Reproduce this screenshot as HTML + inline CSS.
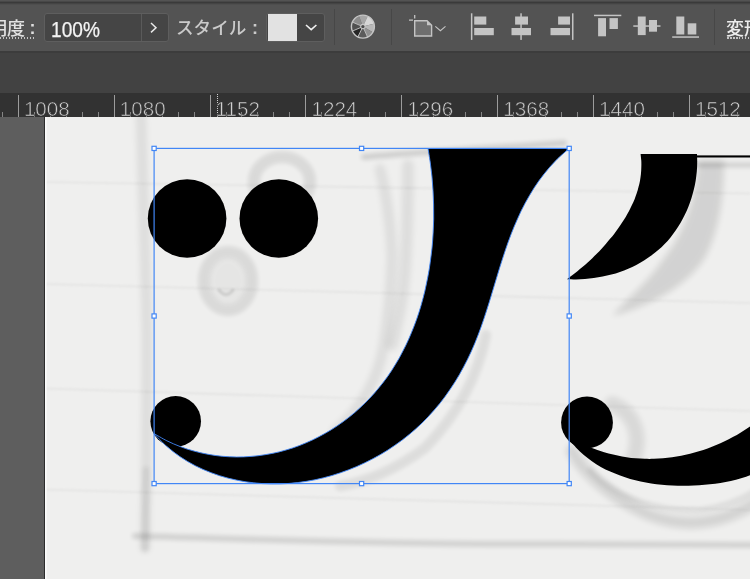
<!DOCTYPE html>
<html lang="ja">
<head>
<meta charset="utf-8">
<title>Illustrator</title>
<style>
html,body{margin:0;padding:0;}
body{width:750px;height:579px;overflow:hidden;background:#424242;position:relative;
  font-family:"Liberation Sans","Noto Sans CJK JP",sans-serif;}
.abs{position:absolute;}
#topstrip{left:0;top:0;width:750px;height:2px;background:linear-gradient(#535353 0,#535353 1px,#484848 1px,#484848 2px);}
#topline{left:0;top:2px;width:750px;height:3px;background:linear-gradient(#3a3a3a 0,#3a3a3a 1px,#444444 1px,#444444 2px,#4e4e4e 2px,#4e4e4e 3px);}
#toolbar{left:0;top:5px;width:750px;height:46px;background:#535353;}
#tbline{left:0;top:51px;width:750px;height:2px;background:#3c3c3c;}
#darkband{left:0;top:53px;width:750px;height:40px;background:#424242;}
#ruler{left:0;top:93px;width:750px;height:24px;background:#323232;overflow:hidden;}
#canvas{left:0;top:117px;width:750px;height:462px;background:#efefee;overflow:hidden;}
.lbl{position:absolute;white-space:nowrap;line-height:1;}
.box{position:absolute;background:#454545;border:1px solid #5e5e5e;box-sizing:border-box;}
.dots{height:1.5px;background:repeating-linear-gradient(90deg,#c4c4c4 0,#c4c4c4 1.5px,transparent 1.5px,transparent 3px);}
.sep{position:absolute;top:9px;width:1px;height:36px;background:#474747;}
.rl{position:absolute;top:5.5px;font-size:20.6px;line-height:1;color:#cfcfcf;white-space:nowrap;
  -webkit-text-stroke:0.6px #323232;letter-spacing:0px;margin-left:-1px;}
</style>
</head>
<body>
<div id="ui" class="abs" style="left:0;top:0;width:750px;height:117px;filter:grayscale(1);overflow:hidden;">
<div id="topstrip" class="abs"></div>
<div id="topline" class="abs"></div>
<div id="toolbar" class="abs"></div>
<div id="tbline" class="abs"></div>
<div id="darkband" class="abs"></div>

<!-- toolbar contents -->
<div class="lbl" id="l1" style="left:-29px;top:19.5px;font-size:18px;font-weight:500;color:#e2e2e2;">透明度</div>
<div class="lbl" id="l1c" style="left:29.6px;top:19.4px;font-size:18px;font-weight:bold;color:#dedede;">:</div>
<div class="abs dots" style="left:0;top:37px;width:36px;"></div>
<div class="box" style="left:44px;top:13px;width:125px;height:29px;border-radius:3px;"></div>
<div class="abs" style="left:141px;top:14px;width:1px;height:27px;background:#5a5a5a;"></div>
<div class="lbl" id="l2" style="left:50.5px;top:19.5px;font-size:21.5px;color:#f4f4f4;-webkit-text-stroke:0.25px #f4f4f4;transform:scaleX(0.89);transform-origin:0 0;">100%</div>
<div class="lbl" id="l3" style="left:176px;top:19.5px;font-size:17.6px;font-weight:500;color:#cacaca;">スタイル</div>
<div class="lbl" id="l3c" style="left:252px;top:19.4px;font-size:18px;font-weight:bold;color:#cacaca;">:</div>
<div class="box" style="left:266px;top:13px;width:59px;height:29px;border-radius:3px;"></div>
<div class="abs" style="left:268px;top:14px;width:29px;height:27px;background:#e2e2e2;"></div>
<div class="sep" style="left:334px;"></div>
<div class="sep" style="left:391px;"></div>
<div class="sep" style="left:714px;"></div>
<div class="lbl" id="l4" style="left:726px;top:19.5px;font-size:18px;font-weight:500;color:#ececec;">変形</div>
<div class="abs dots" style="left:727px;top:37px;width:30px;"></div>

<svg class="abs" id="icons" style="left:0;top:0;" width="750" height="53" viewBox="0 0 750 53">
  <!-- chevrons -->
  <polyline points="151,23 156,27.7 151,32.4" fill="none" stroke="#e8e8e8" stroke-width="1.5"/>
  <polyline points="306,25 311.2,29.6 316.4,25" fill="none" stroke="#f0f0f0" stroke-width="1.6"/>
  <!-- colour wheel -->
  <g id="wheel" transform="translate(362.9,26.6)">
    <path d="M0,0 L-10.49,-4.45 A11.4,11.4 0 0 1 -3.90,-10.71 Z" fill="#8c8c8c"/>
    <path d="M0,0 L-3.90,-10.71 A11.4,11.4 0 0 1 4.82,-10.33 Z" fill="#a6a6a6"/>
    <path d="M0,0 L4.82,-10.33 A11.4,11.4 0 0 1 11.01,-2.95 Z" fill="#d6d6d6"/>
    <path d="M0,0 L11.01,-2.95 A11.4,11.4 0 0 1 9.87,5.70 Z" fill="#b8b8b8"/>
    <path d="M0,0 L9.87,5.70 A11.4,11.4 0 0 1 4.64,10.41 Z" fill="#929292"/>
    <path d="M0,0 L4.64,10.41 A11.4,11.4 0 0 1 -5.00,10.25 Z" fill="#5c5c5c"/>
    <path d="M0,0 L-5.00,10.25 A11.4,11.4 0 0 1 -10.49,4.45 Z" fill="#262626"/>
    <path d="M0,0 L-10.49,4.45 A11.4,11.4 0 0 1 -10.49,-4.45 Z" fill="#505050"/>
    <path d="M0,0 L4.64,10.41" stroke="#c6c6c6" stroke-width="0.9" fill="none"/>
    <path d="M0,0 L-5.00,10.25" stroke="#c6c6c6" stroke-width="0.9" fill="none"/>
    <path d="M0,0 L-10.49,4.45" stroke="#c6c6c6" stroke-width="0.9" fill="none"/>
    <path d="M0,0 L-10.49,-4.45" stroke="#c6c6c6" stroke-width="0.9" fill="none"/>
    <circle r="11.5" fill="none" stroke="#c6c6c6" stroke-width="1.4"/>
    <circle r="2.2" fill="#4a4a4a" stroke="#c6c6c6" stroke-width="1.1"/>
  </g>
  <!-- artboard icon -->
  <path d="M414.7,20.7 H427 L431.6,25.3 V36 H414.7 Z" fill="#6e6e6e" stroke="#c4c4c4" stroke-width="1.4" stroke-linejoin="miter"/>
  <path d="M427,20.7 V25.3 H431.6 Z" fill="#c4c4c4"/>
  <path d="M409,20.2 H413 M414.7,15 V18.6" fill="none" stroke="#c4c4c4" stroke-width="1.3"/>
  <polyline points="435.3,26.3 440.4,30.7 445.5,26.3" fill="none" stroke="#c4c4c4" stroke-width="1.1"/>
  <!-- align icons -->
  <g fill="#c4c4c4">
    <rect x="470.9" y="13.3" width="1.5" height="26.6"/>
    <rect x="474.2" y="16.5" width="12.1" height="8.1"/>
    <rect x="474.2" y="28" width="19.6" height="7.2"/>

    <rect x="520.3" y="13.3" width="1.5" height="26.6"/>
    <rect x="515.1" y="16.5" width="12.9" height="8.1"/>
    <rect x="511.5" y="28" width="19.5" height="7.2"/>

    <rect x="572" y="13.3" width="1.5" height="26.6"/>
    <rect x="558.1" y="16.5" width="11.9" height="8.1"/>
    <rect x="550.5" y="28" width="19.5" height="7.2"/>

    <rect x="594" y="14.7" width="27.3" height="1.5"/>
    <rect x="598.1" y="18.1" width="7.9" height="18.2"/>
    <rect x="609.5" y="18.1" width="8.4" height="10.9"/>

    <rect x="633.3" y="25.3" width="27.2" height="1.5"/>
    <rect x="637.8" y="16.5" width="7.9" height="18.6"/>
    <rect x="649" y="20" width="8" height="11.7"/>

    <rect x="672.2" y="36.3" width="26.8" height="1.5"/>
    <rect x="676.3" y="16.5" width="8" height="18"/>
    <rect x="687.7" y="23.3" width="8.6" height="11.2"/>
  </g>
</svg>

<!-- ruler -->
<div id="ruler" class="abs">
  <svg class="abs" style="left:0;top:0" width="750" height="24" viewBox="0 0 750 24">
    <g id="ticks" stroke-width="1" shape-rendering="crispEdges">
      <path stroke="#9c9c9c" d="M18.5,1.5V24 M114.5,1.5V24 M210.5,1.5V24 M305.5,1.5V24 M401.5,1.5V24 M497.5,1.5V24 M593.5,1.5V24 M689.5,1.5V24"/>
      <path stroke="#858585" d="M2.5,19V24 M34.5,19V24 M50.5,19V24 M66.5,19V24 M82.5,19V24 M98.5,19V24 M130.5,19V24 M146.5,19V24 M162.5,19V24 M178.5,19V24 M194.5,19V24 M226.5,19V24 M241.5,19V24 M257.5,19V24 M273.5,19V24 M289.5,19V24 M321.5,19V24 M337.5,19V24 M353.5,19V24 M369.5,19V24 M385.5,19V24 M417.5,19V24 M433.5,19V24 M449.5,19V24 M465.5,19V24 M481.5,19V24 M513.5,19V24 M529.5,19V24 M545.5,19V24 M561.5,19V24 M577.5,19V24 M609.5,19V24 M625.5,19V24 M641.5,19V24 M657.5,19V24 M673.5,19V24 M705.5,19V24 M721.5,19V24 M737.5,19V24"/>
    </g>
    <path d="M217.5,1V24" stroke="#d0d0d0" stroke-width="1" stroke-dasharray="1 1" shape-rendering="crispEdges"/>
  </svg>
  <div class="rl" style="left:24.9px;">1008</div>
  <div class="rl" style="left:120.8px;">1080</div>
  <div class="rl" style="left:216.6px;">1152</div>
  <div class="rl" style="left:312.5px;">1224</div>
  <div class="rl" style="left:408.4px;">1296</div>
  <div class="rl" style="left:504.3px;">1368</div>
  <div class="rl" style="left:600.1px;">1440</div>
  <div class="rl" style="left:696.0px;">1512</div>
</div>

</div>
<!-- canvas -->
<div id="canvas" class="abs">
  <svg class="abs" style="left:0;top:0" width="750" height="462" viewBox="0 117 750 462">
    <defs>
      <filter id="b1" filterUnits="userSpaceOnUse" x="0" y="100" width="760" height="490"><feGaussianBlur stdDeviation="0.8"/></filter>
      <filter id="b2" filterUnits="userSpaceOnUse" x="0" y="100" width="760" height="490"><feGaussianBlur stdDeviation="2"/></filter>
      <filter id="b3" filterUnits="userSpaceOnUse" x="0" y="100" width="760" height="490"><feGaussianBlur stdDeviation="3"/></filter>
    </defs>
    <rect x="0" y="117" width="750" height="462" fill="#efefee"/>
    <!-- pencil sketch layer -->
    <g id="pencil" fill="none" stroke="#000" stroke-linecap="round">
      <!-- notebook ruled lines -->
      <g stroke="#8a8a8a" stroke-width="1.6" opacity="0.12" filter="url(#b1)">
        <path d="M45,182 L750,193.5"/>
        <path d="M45,284 L750,303"/>
        <path d="M45,388.5 L750,411"/>
        <path d="M45,489.5 L750,510"/>
      </g>
      <!-- vertical margin line -->
      <path d="M141,112 C143,200 147,300 147,340 C147,420 146,500 145,548" stroke-width="10" opacity="0.075" filter="url(#b3)"/>
      <path d="M146,470 L145,548" stroke-width="7" opacity="0.07" filter="url(#b2)"/>
      <!-- bottom line -->
      <path d="M135,536 C250,539 400,545 560,544 L760,545" stroke-width="6" opacity="0.12" filter="url(#b2)"/>
      <!-- circle sketches -->
      <ellipse cx="282" cy="182" rx="28" ry="25" stroke-width="12" opacity="0.085" filter="url(#b2)"/>
      <ellipse cx="228" cy="281" rx="24" ry="29" stroke-width="12" opacity="0.085" filter="url(#b2)"/>
      <ellipse cx="228" cy="281" rx="18" ry="23" fill="#000" stroke="none" opacity="0.035" filter="url(#b2)"/>
      <path d="M219,290 Q226,299 233,290" stroke-width="3" opacity="0.10" filter="url(#b1)"/>
      <!-- J sketch -->
      <path d="M364,157 C400,153 470,150 564,143" stroke-width="6" opacity="0.13" filter="url(#b2)"/>
      <path d="M380,169 C388,200 392,240 392,260 C391,290 388,320 384,345 C378,380 360,410 335,432" stroke-width="10" opacity="0.075" filter="url(#b3)"/>
      <path d="M408,165 C408,200 407,240 405,270 C403,300 398,320 392,345" stroke-width="11" opacity="0.075" filter="url(#b3)"/>
      <path d="M486,335 C478,375 460,412 425,448 C395,470 365,482 340,486" stroke-width="10" opacity="0.075" filter="url(#b2)"/>
      <!-- right glyph sketch -->
      <path d="M698,160 L724,160 C724,195 720,228 706,256 C692,280 660,303 612,316 C628,298 648,282 664,258 C682,236 696,200 698,160 Z" fill="#000" stroke="none" opacity="0.115" filter="url(#b3)"/>
      <path d="M698,165 L760,165" stroke-width="5" opacity="0.12" filter="url(#b2)"/>
      <!-- right dot + swoosh sketch -->
      <path d="M612,404 C634,412 645,438 630,466" stroke-width="15" opacity="0.09" filter="url(#b3)"/>
      <path d="M572,451 C585,475 615,500 650,515 C690,530 725,522 760,500" stroke-width="12" opacity="0.11" filter="url(#b3)"/>
      <path d="M590,470 C615,498 660,512 700,510 C725,507 745,498 760,488" stroke-width="5" opacity="0.08" filter="url(#b2)"/>
    </g>
    <!-- pasteboard -->
    <rect x="0" y="117" width="44" height="462" fill="#5e5e5e"/>
    <rect x="44" y="117" width="1" height="462" fill="#2c2c2c"/>
    <rect x="45" y="117" width="1.6" height="462" fill="#fbfbfb"/>
    <!-- black art -->
    <g id="art" fill="#000">
      <circle cx="187.1" cy="218.5" r="39.3"/>
      <circle cx="278.8" cy="218.5" r="39.3"/>
      <circle cx="175.7" cy="421.3" r="25.3"/>
      <path id="jshape" d="M428,148.5 L569,148.5 C566.8,150.5 559.8,156.5 555.6,160.8 C551.5,165.0 547.6,169.5 544.0,174.1 C540.4,178.6 537.0,183.4 533.9,188.2 C530.8,193.1 527.9,198.1 525.2,203.1 C522.4,208.2 519.9,213.4 517.6,218.7 C515.2,223.9 513.0,229.3 510.9,234.7 C508.8,240.2 506.9,245.7 505.0,251.2 C503.1,256.7 501.3,262.3 499.6,267.9 C497.8,273.5 496.2,279.1 494.5,284.8 C492.8,290.4 491.1,296.1 489.4,301.7 C487.7,307.3 485.9,312.9 484.0,318.5 C482.2,324.0 480.2,329.6 478.1,335.0 C476.0,340.5 473.8,345.9 471.4,351.2 C468.9,356.5 466.4,361.8 463.6,366.9 C460.9,372.1 458.0,377.2 454.9,382.1 C451.8,387.0 448.5,391.8 445.1,396.5 C441.7,401.2 438.0,405.8 434.2,410.1 C430.4,414.5 426.4,418.8 422.3,422.8 C418.1,426.9 413.7,430.8 409.2,434.5 C404.7,438.2 400.0,441.8 395.2,445.1 C390.4,448.5 385.5,451.6 380.4,454.6 C375.3,457.5 370.1,460.3 364.8,462.8 C359.6,465.4 354.1,467.7 348.7,469.8 C343.2,471.9 337.6,473.8 332.0,475.5 C326.4,477.1 320.7,478.6 314.9,479.8 C309.2,480.9 303.4,481.9 297.6,482.6 C291.8,483.3 285.9,483.7 280.1,483.9 C274.2,484.0 268.3,484.0 262.5,483.6 C256.6,483.2 250.8,482.6 245.0,481.7 C239.2,480.7 233.4,479.5 227.8,478.1 C222.2,476.6 216.6,474.8 211.1,472.7 C205.7,470.7 200.4,468.3 195.2,465.7 C190.1,463.0 185.0,460.1 180.2,456.8 C175.4,453.6 170.8,450.0 166.4,446.1 C162.1,442.3 156.1,435.7 154.0,433.6 C156.2,434.8 162.5,438.6 166.9,440.8 C171.3,443.0 175.8,444.9 180.3,446.6 C184.8,448.4 189.4,449.9 194.1,451.1 C198.7,452.4 203.4,453.5 208.1,454.3 C212.8,455.2 217.6,455.8 222.3,456.3 C227.1,456.7 231.9,456.9 236.6,457.0 C241.4,457.0 246.2,456.8 250.9,456.4 C255.7,456.1 260.4,455.5 265.1,454.7 C269.8,454.0 274.5,453.0 279.1,451.9 C283.7,450.7 288.3,449.4 292.8,447.9 C297.3,446.4 301.7,444.7 306.1,442.8 C310.4,441.0 314.7,438.9 318.9,436.7 C323.1,434.5 327.3,432.2 331.3,429.7 C335.3,427.2 339.3,424.5 343.1,421.7 C346.9,418.9 350.6,416.0 354.3,412.9 C357.9,409.8 361.4,406.6 364.8,403.3 C368.1,400.0 371.4,396.5 374.5,393.0 C377.6,389.4 380.6,385.8 383.5,382.0 C386.4,378.2 389.1,374.4 391.7,370.4 C394.3,366.4 396.7,362.4 399.1,358.3 C401.4,354.1 403.6,349.9 405.7,345.6 C407.8,341.3 409.7,337.0 411.5,332.5 C413.4,328.1 415.1,323.6 416.7,319.1 C418.3,314.6 419.7,310.0 421.1,305.3 C422.4,300.7 423.7,296.0 424.8,291.3 C425.9,286.5 426.9,281.8 427.8,277.0 C428.8,272.2 429.5,267.4 430.2,262.6 C430.9,257.8 431.5,252.9 432.0,248.1 C432.5,243.2 432.8,238.4 433.1,233.5 C433.4,228.7 433.6,223.8 433.7,219.0 C433.7,214.2 433.7,209.3 433.6,204.5 C433.5,199.7 433.3,194.9 433.0,190.2 C432.7,185.4 432.3,180.7 431.9,176.0 C431.4,171.4 430.8,166.7 430.2,162.1 C429.5,157.5 428.4,150.8 428.0,148.5 Z" stroke="#4186f6" stroke-width="0.9"/>
      <path id="rshape" d="M697,154 L640.6,154 C640.7,155.1 641.1,158.6 641.3,160.8 C641.4,163.1 641.4,165.4 641.3,167.6 C641.3,169.8 641.1,172.0 640.9,174.2 C640.7,176.4 640.3,178.5 640.0,180.7 C639.6,182.8 639.1,184.9 638.5,187.0 C638.0,189.1 637.4,191.2 636.7,193.3 C636.0,195.3 635.3,197.3 634.5,199.4 C633.6,201.4 632.8,203.4 631.8,205.3 C630.9,207.3 629.9,209.3 628.9,211.2 C627.9,213.1 626.8,215.0 625.7,216.9 C624.5,218.8 623.4,220.7 622.1,222.5 C620.9,224.4 619.7,226.2 618.4,228.0 C617.1,229.8 615.8,231.6 614.5,233.4 C613.1,235.2 611.7,236.9 610.3,238.6 C608.9,240.3 607.5,242.0 606.0,243.7 C604.6,245.4 603.1,247.0 601.6,248.7 C600.1,250.3 598.6,251.9 597.0,253.5 C595.4,255.1 593.9,256.6 592.3,258.2 C590.7,259.7 589.1,261.2 587.4,262.7 C585.8,264.2 584.1,265.6 582.4,267.1 C580.8,268.5 579.1,269.9 577.4,271.3 C575.7,272.6 574.0,274.0 572.2,275.3 C570.5,276.6 567.9,278.6 567.0,279.2 C568.5,279.2 572.9,279.4 575.9,279.4 C578.9,279.4 581.9,279.3 584.9,279.1 C587.8,278.8 590.8,278.5 593.8,278.1 C596.8,277.7 599.7,277.2 602.6,276.6 C605.6,276.0 608.5,275.4 611.4,274.6 C614.2,273.8 617.1,272.9 619.9,271.9 C622.7,271.0 625.5,269.9 628.2,268.7 C631.0,267.5 633.6,266.3 636.3,264.9 C638.9,263.6 641.5,262.1 644.0,260.6 C646.5,259.0 648.9,257.4 651.3,255.6 C653.7,253.9 656.0,252.1 658.2,250.1 C660.4,248.2 662.6,246.2 664.6,244.0 C666.7,241.9 668.6,239.7 670.5,237.4 C672.4,235.1 674.2,232.7 675.8,230.3 C677.5,227.8 679.1,225.3 680.6,222.7 C682.1,220.1 683.5,217.4 684.8,214.7 C686.2,212.0 687.4,209.3 688.5,206.5 C689.6,203.7 690.6,200.9 691.5,198.0 C692.4,195.1 693.2,192.2 693.9,189.3 C694.6,186.4 695.2,183.4 695.7,180.5 C696.1,177.6 696.5,174.6 696.8,171.6 C697.0,168.7 697.2,165.7 697.2,162.8 C697.3,159.8 697.0,155.5 697.0,154.0 Z"/>
      <rect x="696.5" y="155.4" width="54" height="2.1"/>
      <circle cx="587" cy="422.4" r="25.9"/>
      <path id="rswoosh" d="M591.0,447.4 C592.5,448.0 596.8,449.7 599.7,450.7 C602.7,451.7 605.6,452.6 608.6,453.5 C611.6,454.3 614.6,455.0 617.6,455.6 C620.5,456.3 623.6,456.8 626.6,457.2 C629.6,457.7 632.6,458.0 635.7,458.3 C638.7,458.6 641.8,458.7 644.8,458.8 C647.8,458.9 650.9,458.9 653.9,458.8 C657.0,458.7 660.0,458.5 663.0,458.3 C666.1,458.0 669.1,457.7 672.1,457.3 C675.1,456.8 678.2,456.3 681.2,455.7 C684.1,455.2 687.1,454.5 690.1,453.8 C693.1,453.0 696.0,452.2 698.9,451.3 C701.9,450.4 704.8,449.4 707.6,448.4 C710.5,447.3 713.4,446.2 716.2,445.0 C719.0,443.8 721.8,442.6 724.6,441.2 C727.4,439.9 730.1,438.5 732.8,437.0 C735.5,435.6 738.2,434.0 740.8,432.4 C743.4,430.8 746.0,429.1 748.5,427.4 C751.1,425.7 754.8,422.9 756.0,422.0 L756,473 C754.4,473.6 749.5,475.6 746.1,476.7 C742.8,477.8 739.4,478.8 736.0,479.7 C732.6,480.6 729.1,481.3 725.6,482.0 C722.2,482.6 718.7,483.2 715.2,483.7 C711.6,484.1 708.1,484.5 704.6,484.8 C701.0,485.1 697.5,485.4 693.9,485.5 C690.3,485.7 686.8,485.8 683.2,485.8 C679.6,485.8 676.0,485.7 672.5,485.5 C668.9,485.3 665.4,485.1 661.8,484.7 C658.2,484.4 654.7,483.9 651.2,483.4 C647.6,482.8 644.1,482.2 640.6,481.4 C637.1,480.7 633.7,479.8 630.2,478.9 C626.8,477.9 623.4,476.8 620.1,475.6 C616.7,474.4 613.4,473.1 610.2,471.6 C607.0,470.2 603.9,468.6 600.8,466.9 C597.7,465.2 594.8,463.3 591.9,461.3 C589.0,459.3 586.2,457.1 583.5,454.8 C580.9,452.5 578.3,450.0 575.9,447.4 C573.5,444.8 570.1,440.4 569.0,439.0 Z"/>
    </g>
    <!-- selection -->
    <g id="sel" fill="none" stroke="#4186f6" stroke-width="1.2">
      <rect x="154.1" y="148.4" width="415.1" height="335.2"/>
    </g>
    <g id="handles" fill="#fff" stroke="#4186f6" stroke-width="1.2">
      <rect x="152.0" y="146.3" width="4.2" height="4.2"/>
      <rect x="359.5" y="146.3" width="4.2" height="4.2"/>
      <rect x="567.1" y="146.3" width="4.2" height="4.2"/>
      <rect x="152.0" y="313.9" width="4.2" height="4.2"/>
      <rect x="567.1" y="313.9" width="4.2" height="4.2"/>
      <rect x="152.0" y="481.5" width="4.2" height="4.2"/>
      <rect x="359.5" y="481.5" width="4.2" height="4.2"/>
      <rect x="567.1" y="481.5" width="4.2" height="4.2"/>
    </g>
  </svg>
</div>
</body>
</html>
